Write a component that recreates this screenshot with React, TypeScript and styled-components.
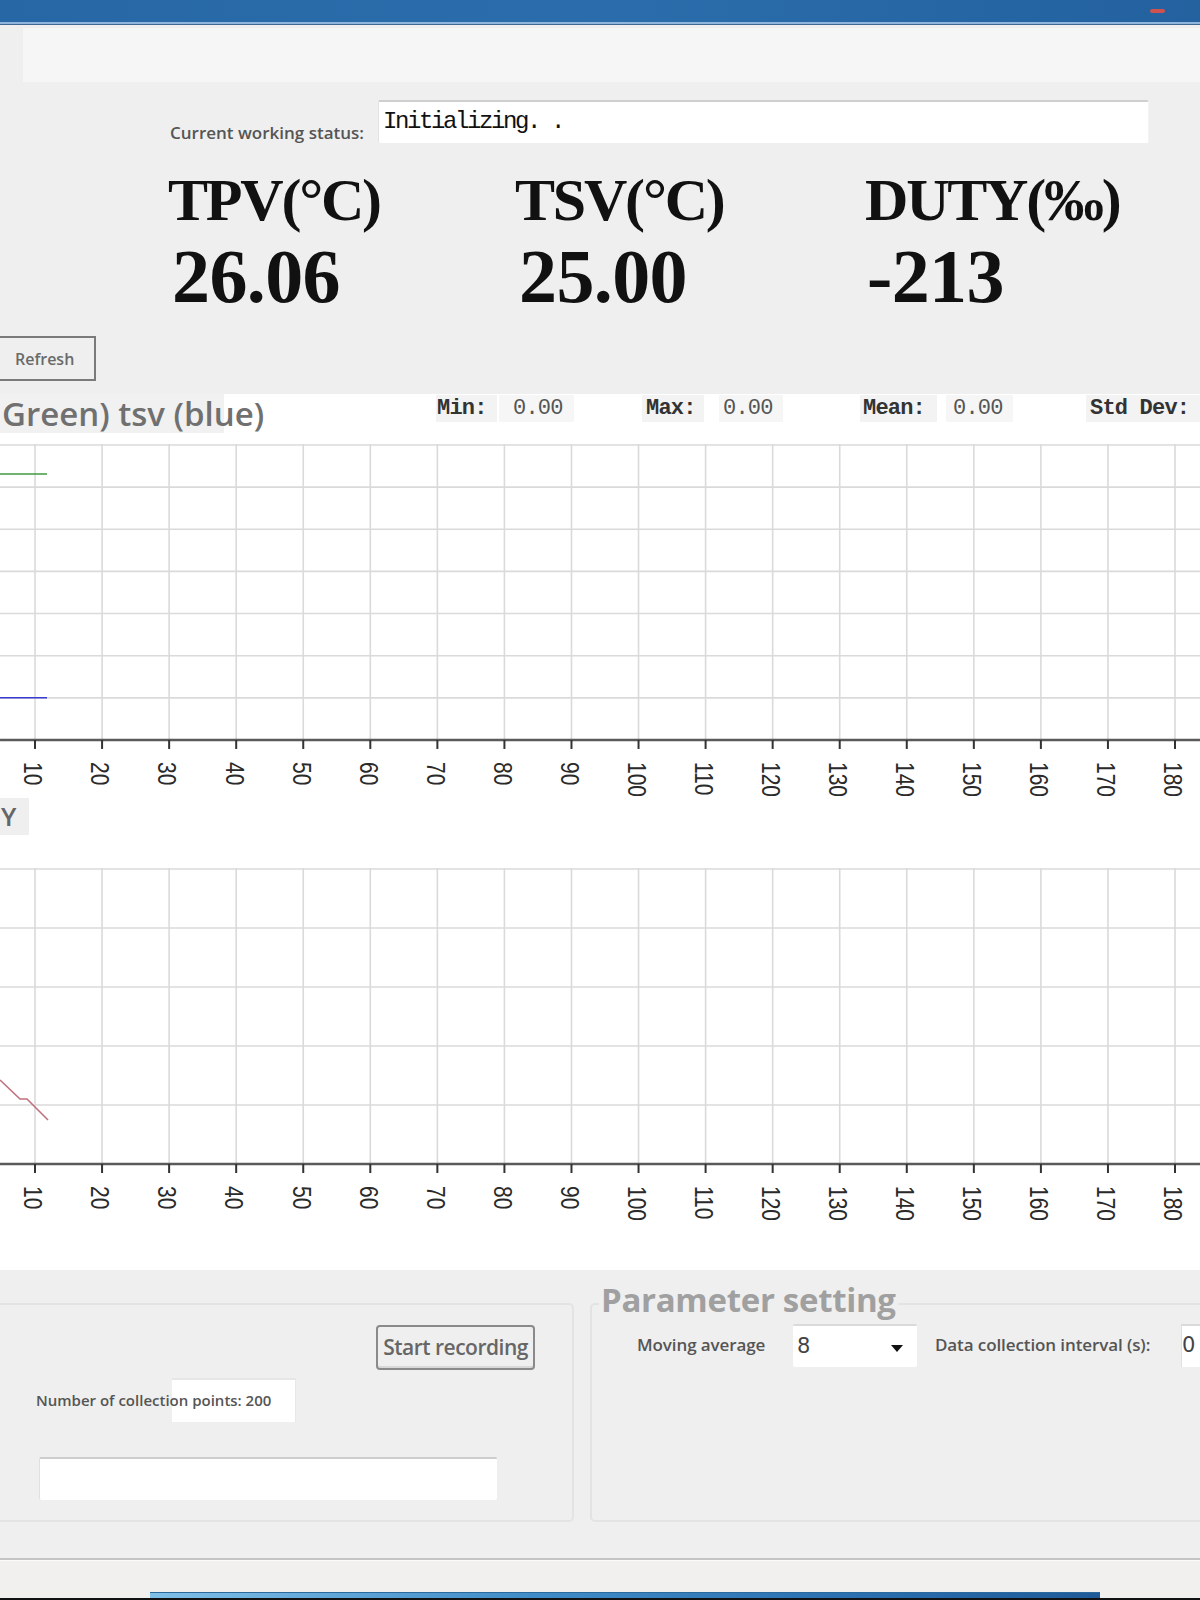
import React from 'react';
import styled, { createGlobalStyle } from 'styled-components';

const GlobalStyle = createGlobalStyle`
  html, body { margin: 0; padding: 0; background: #efefef; }
  body { font-family: "Open Sans", "Noto Sans", sans-serif; }
  * { box-sizing: border-box; }
`;

const Window = styled.div`
  width: 1200px;
  height: 1600px;
  overflow: hidden;
  display: flex;
  flex-direction: column;
  background: #efefef;
`;

const TitleBar = styled.div`
  flex: none;
  height: 25px;
  background: linear-gradient(90deg, #2767a6 0%, #2b6dac 50%, #23619f 100%);
  border-bottom: 1px solid #3f6894;
  box-shadow: inset 0 -2px 0 #8fb5dc;
  display: flex;
  justify-content: flex-end;
  align-items: flex-start;
  padding: 9px 35px 0 0;
`;

const CloseDot = styled.span`
  width: 15px;
  height: 4px;
  border-radius: 2px;
  background: #d0524e;
`;

const TopBand = styled.div`
  flex: none;
  height: 54px;
  margin: 3px 0 0 23px;
  background: #f6f6f6;
`;

const StatusRow = styled.div`
  display: flex;
  align-items: flex-end;
  gap: 14px;
  margin-top: 18px;
  padding-left: 170px;
`;

const FieldLabel = styled.span<{ $size?: number }>`
  font-size: ${(p) => p.$size ?? 16}px;
  font-weight: 600;
  color: #555;
  line-height: 20px;
  white-space: nowrap;
`;

const StatusBox = styled.div`
  width: 771px;
  height: 43px;
  background: #fff;
  border-top: 2px solid #cfcfcf;
  border-left: 1px solid #e2e2e2;
  border-right: 1px solid #f4f4f4;
  border-radius: 2px;
  padding: 5px 0 0 4px;
  font-family: "Liberation Mono", monospace;
  font-size: 24px;
  letter-spacing: -2.4px;
  color: #111;
  line-height: 30px;
`;

const Readouts = styled.div`
  display: grid;
  grid-template-columns: 347px 350px 1fr;
  row-gap: 8px;
  margin-top: 27px;
  padding-left: 168px;
`;

const ReadoutTitle = styled.div`
  font-family: "Liberation Serif", "Times New Roman", serif;
  font-weight: 700;
  font-size: 60px;
  line-height: 60px;
  letter-spacing: -2.2px;
  color: #111;
  white-space: nowrap;
`;

const ReadoutValue = styled.div<{ $indent: number }>`
  font-family: "Liberation Serif", "Times New Roman", serif;
  font-weight: 700;
  font-size: 76px;
  line-height: 76px;
  color: #111;
  padding-left: ${(p) => p.$indent}px;
  letter-spacing: -0.6px;
`;

const RefreshButton = styled.button`
  align-self: flex-start;
  margin: 22px 0 0 -4px;
  width: 100px;
  height: 45px;
  border: 2px solid #7a7a7a;
  background: #efefef;
  padding: 0 0 0 17px;
  text-align: left;
  font-family: "Open Sans", sans-serif;
  font-size: 16px;
  font-weight: 600;
  color: #6a6a6a;
`;

const ChartPanel = styled.div`
  margin-top: 13px;
  background: #fff;
  display: flex;
  flex-direction: column;
  padding-bottom: 42px;
`;

const ChartHeader = styled.div`
  height: 50px;
  display: flex;
  align-items: flex-start;
`;

const ChartTitle = styled.div`
  width: 224px;
  flex: none;
  height: 39px;
  background: #f1f1f1;
  padding-left: 2px;
  font-size: 33px;
  font-weight: 600;
  line-height: 40px;
  color: #707070;
  white-space: nowrap;
  letter-spacing: 0;
`;

const StatCell = styled.div<{ $w: number; $ml: number; $pad: number; $label?: boolean }>`
  flex: none;
  width: ${(p) => p.$w}px;
  margin-left: ${(p) => p.$ml}px;
  margin-top: 1px;
  height: 27px;
  padding-left: ${(p) => p.$pad}px;
  background: ${(p) => (p.$label ? '#f3f3f3' : '#f6f6f6')};
  font-family: "Liberation Mono", monospace;
  font-size: 22px;
  line-height: 27px;
  letter-spacing: -0.8px;
  color: ${(p) => (p.$label ? '#333' : '#555')};
  font-weight: ${(p) => (p.$label ? 700 : 400)};
  white-space: nowrap;
`;

const PlotSvg = styled.svg`
  display: block;
  overflow: visible;
  flex: none;
`;

const AxisTitleRow = styled.div`
  height: 37px;
  margin-bottom: 33px;
  display: flex;
`;

const AxisTitle = styled.div`
  width: 29px;
  height: 37px;
  background: #efefef;
  padding-left: 1px;
  font-size: 26px;
  font-weight: 600;
  line-height: 37px;
  color: #666;
  white-space: nowrap;
`;

const BottomArea = styled.div`
  display: flex;
  gap: 16px;
  margin-top: 33px;
  height: 219px;
`;

const GroupBox = styled.div<{ $w?: number }>`
  flex: ${(p) => (p.$w ? 'none' : '1')};
  width: ${(p) => (p.$w ? `${p.$w}px` : 'auto')};
  height: 219px;
  border: 2px solid #e3e3e3;
  border-radius: 5px;
  display: flex;
  flex-direction: column;
`;

const LeftGroup = styled(GroupBox)`
  margin-left: -10px;
  padding-top: 20px;
`;

const RightGroup = styled(GroupBox)`
  margin-right: -30px;
`;

const ButtonRow = styled.div`
  display: flex;
  justify-content: flex-end;
  padding-right: 37px;
`;

const RecordButton = styled.button`
  width: 159px;
  height: 45px;
  border: 2px solid #8a8a8a;
  border-radius: 4px;
  background: #efefef;
  box-shadow: inset 0 -2px 0 #d8d8d8;
  padding: 0;
  font-family: "Open Sans", sans-serif;
  font-size: 21px;
  font-weight: 600;
  color: #666;
  letter-spacing: -0.5px;
`;

const PointsRow = styled.div`
  display: grid;
  grid-template-columns: 136px 124px 1fr;
  margin: 8px 0 0 44px;
  height: 44px;
  align-items: center;
`;

const PointsBox = styled.div`
  grid-row: 1;
  grid-column: 2;
  height: 44px;
  background: #fff;
  border-top: 2px solid #e6e6e6;
  border-right: 1px solid #e8e8e8;
`;

const PointsLabel = styled(FieldLabel)`
  grid-row: 1;
  grid-column: 1 / 4;
  position: relative;
  z-index: 1;
`;

const WideInput = styled.div`
  margin: 35px 0 0 47px;
  width: 458px;
  height: 43px;
  background: #fff;
  border-top: 2px solid #cdcdcd;
  border-left: 1px solid #e0e0e0;
  border-radius: 2px;
`;

const GroupTitle = styled.div`
  align-self: flex-start;
  margin: -23px 0 0 7px;
  padding: 0 2px;
  background: #efefef;
  font-size: 33px;
  font-weight: 700;
  line-height: 36px;
  color: #a0a0a0;
  letter-spacing: -0.3px;
`;

const ParamRow = styled.div`
  display: flex;
  align-items: center;
  margin-top: 6px;
  padding-left: 45px;
  height: 43px;
`;

const ParamLabel = styled(FieldLabel)<{ $w: number; $ml?: number }>`
  width: ${(p) => p.$w}px;
  margin-left: ${(p) => p.$ml ?? 0}px;
  flex: none;
  letter-spacing: -0.1px;
`;

const Combo = styled.div`
  flex: none;
  width: 124px;
  height: 43px;
  background: #fff;
  border-top: 2px solid #dadada;
  border-radius: 2px;
  display: flex;
  align-items: center;
  justify-content: space-between;
  padding: 0 14px 0 4px;
  font-family: "DejaVu Sans", sans-serif;
  font-size: 21px;
  color: #444;
`;

const ComboArrow = styled.span`
  width: 0;
  height: 0;
  margin-top: 5px;
  border-left: 6px solid transparent;
  border-right: 6px solid transparent;
  border-top: 7px solid #111;
`;

const SmallInput = styled.div`
  flex: none;
  width: 100px;
  height: 43px;
  background: #fff;
  border-top: 2px solid #dadada;
  border-left: 1px solid #e0e0e0;
  padding-left: 0;
  font-family: "DejaVu Sans", sans-serif;
  font-size: 21px;
  line-height: 38px;
  color: #444;
`;

const Footer = styled.div`
  margin-top: auto;
  flex: none;
  display: flex;
  flex-direction: column;
`;

const Separator = styled.div`
  height: 3px;
  border-top: 2px solid #c4c4c4;
  background: #fafafa;
`;

const StatusStrip = styled.div`
  height: 31px;
  background: #f2f0ef;
`;

const TaskRow = styled.div`
  height: 8px;
  display: flex;
  flex-direction: column;
  background: #f2f0ef;
  border-bottom: 2px solid #111;
`;

const TaskBar = styled.div`
  margin-left: 150px;
  width: 950px;
  height: 6px;
  border-top: 1px solid #2c6a9e;
  background: linear-gradient(90deg, #7fc0e8 0%, #3f8cc8 40%, #2a6fb0 75%, #1f5a98 100%);
`;

type Series = { color: string; points: [number, number][] };

const GRID_X0 = 35;
const GRID_DX = 67.06;
const TICKS = Array.from({ length: 18 }, (_, i) => ({
  x: GRID_X0 + GRID_DX * i,
  label: String((i + 1) * 10),
}));

function Plot({ rows, rowH, series, tail }: { rows: number; rowH: number; series: Series[]; tail: number }) {
  const axisY = rows * rowH + 1;
  const h = axisY + tail;
  return (
    <PlotSvg width={1200} height={h} viewBox={`0 0 1200 ${h}`}>
      {Array.from({ length: rows }, (_, r) => (
        <line key={`h${r}`} x1={0} x2={1200} y1={1 + r * rowH} y2={1 + r * rowH} stroke="#dadada" strokeWidth={1.6} />
      ))}
      {TICKS.map((t) => (
        <line key={`v${t.label}`} x1={t.x} x2={t.x} y1={0} y2={axisY} stroke="#dadada" strokeWidth={1.6} />
      ))}
      {series.map((s, i) => (
        <polyline
          key={`s${i}`}
          points={s.points.map((p) => p.join(',')).join(' ')}
          fill="none"
          stroke={s.color}
          strokeWidth={1.6}
        />
      ))}
      <line x1={0} x2={1200} y1={axisY} y2={axisY} stroke="#5a5a5a" strokeWidth={2.5} />
      {TICKS.map((t) => (
        <line key={`t${t.label}`} x1={t.x} x2={t.x} y1={axisY} y2={axisY + 9} stroke="#333" strokeWidth={2} />
      ))}
      {TICKS.map((t) => (
        <text
          key={`l${t.label}`}
          transform={`translate(${t.x - 2} ${axisY + 22}) rotate(90) scale(1 1.2)`}
          dominantBaseline="central"
          fontSize={21}
          fontFamily='"Liberation Sans", Arial, sans-serif'
          fill="#2a2a2a"
        >
          {t.label}
        </text>
      ))}
    </PlotSvg>
  );
}

const STATS = [
  { text: 'Min:', w: 61, ml: 212, pad: 1, label: true },
  { text: '0.00', w: 75, ml: 2, pad: 14 },
  { text: 'Max:', w: 62, ml: 68, pad: 4, label: true },
  { text: '0.00', w: 64, ml: 15, pad: 4 },
  { text: 'Mean:', w: 77, ml: 77, pad: 3, label: true },
  { text: '0.00', w: 67, ml: 9, pad: 7 },
  { text: 'Std Dev:', w: 130, ml: 73, pad: 4, label: true },
];

const READOUTS = [
  { title: 'TPV(°C)', value: '26.06', indent: 4 },
  { title: 'TSV(°C)', value: '25.00', indent: 4 },
  { title: 'DUTY(‰)', value: '-213', indent: 2 },
];

export default function App() {
  return (
    <>
      <GlobalStyle />
      <Window>
        <TitleBar>
          <CloseDot />
        </TitleBar>
        <TopBand />
        <StatusRow>
          <FieldLabel $size={17}>Current working status:</FieldLabel>
          <StatusBox>Initializing. .</StatusBox>
        </StatusRow>
        <Readouts>
          {READOUTS.map((r) => (
            <ReadoutTitle key={r.title}>{r.title}</ReadoutTitle>
          ))}
          {READOUTS.map((r) => (
            <ReadoutValue key={r.value} $indent={r.indent}>
              {r.value}
            </ReadoutValue>
          ))}
        </Readouts>
        <RefreshButton>Refresh</RefreshButton>
        <ChartPanel>
          <ChartHeader>
            <ChartTitle>Green) tsv (blue)</ChartTitle>
            {STATS.map((s, i) => (
              <StatCell key={i} $w={s.w} $ml={s.ml} $pad={s.pad} $label={s.label}>
                {s.text}
              </StatCell>
            ))}
          </ChartHeader>
          <Plot
            rows={7}
            rowH={42.14}
            tail={58}
            series={[
              { color: '#3f9a3f', points: [[0, 30], [47, 30]] },
              { color: '#3a3ad0', points: [[0, 253.8], [47, 253.8]] },
            ]}
          />
          <AxisTitleRow>
            <AxisTitle>Y</AxisTitle>
          </AxisTitleRow>
          <Plot
            rows={5}
            rowH={59}
            tail={64}
            series={[{ color: '#c0707e', points: [[0, 212], [20, 231], [27, 231], [48, 252]] }]}
          />
        </ChartPanel>
        <BottomArea>
          <LeftGroup $w={584}>
            <ButtonRow>
              <RecordButton>Start recording</RecordButton>
            </ButtonRow>
            <PointsRow>
              <PointsBox />
              <PointsLabel $size={15}>Number of collection points: 200</PointsLabel>
            </PointsRow>
            <WideInput />
          </LeftGroup>
          <RightGroup>
            <GroupTitle>Parameter setting</GroupTitle>
            <ParamRow>
              <ParamLabel $w={156} $size={17}>Moving average</ParamLabel>
              <Combo>
                <span>8</span>
                <ComboArrow />
              </Combo>
              <ParamLabel $w={246} $ml={18} $size={17}>Data collection interval (s):</ParamLabel>
              <SmallInput>0</SmallInput>
            </ParamRow>
          </RightGroup>
        </BottomArea>
        <Footer>
          <Separator />
          <StatusStrip />
          <TaskRow>
            <TaskBar />
          </TaskRow>
        </Footer>
      </Window>
    </>
  );
}
